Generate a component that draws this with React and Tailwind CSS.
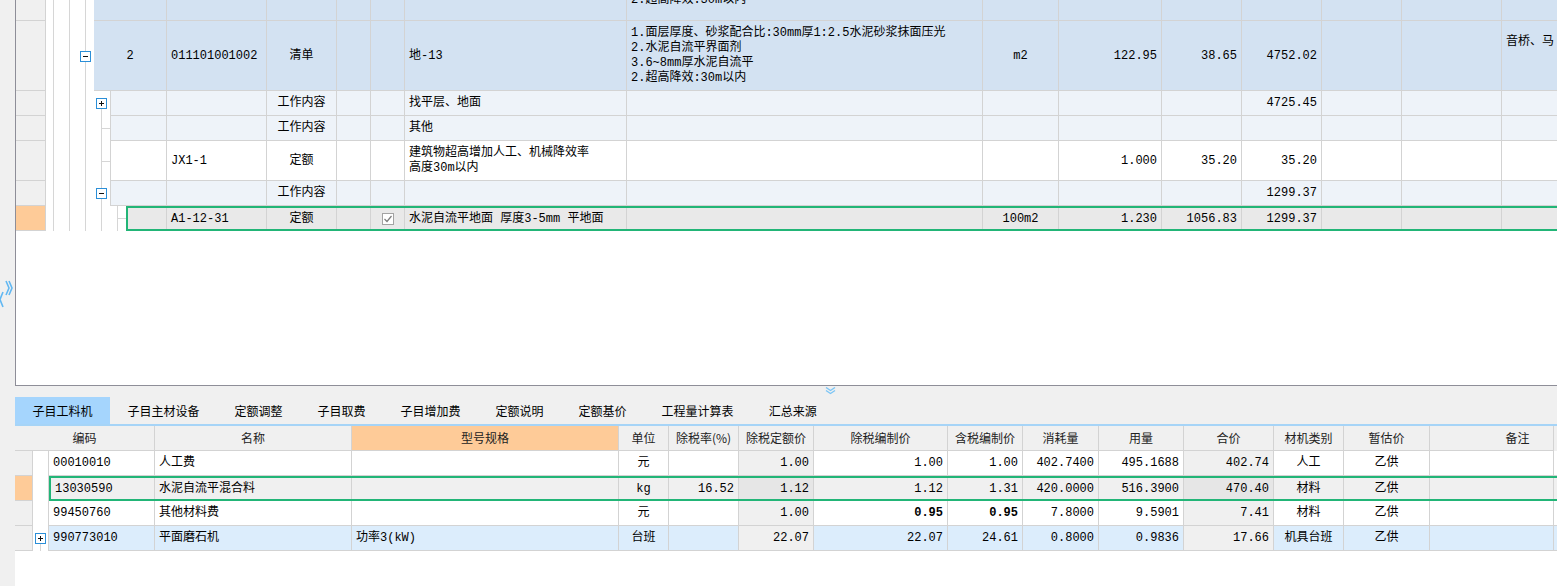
import React from 'react'

// 上部清单表格列（第一列宽度随层级变化）
const TOP_COLS = [
  { w: 'w-[100px]', al: 'l' },
  { w: 'w-[70px]', al: 'c' },
  { w: 'w-[34px]', al: 'c' },
  { w: 'w-[34px]', al: 'c' },
  { w: 'w-[222px]', al: 'l' },
  { w: 'w-[356px]', al: 'l' },
  { w: 'w-[76px]', al: 'c' },
  { w: 'w-[103px]', al: 'r' },
  { w: 'w-[80px]', al: 'r' },
  { w: 'w-[80px]', al: 'r' },
  { w: 'w-[80px]', al: 'r' },
  { w: 'w-[100px]', al: 'l' },
  { w: 'w-[200px]', al: 'l' },
]

const DESC = [
  '1.面层厚度、砂浆配合比:30mm厚1:2.5水泥砂浆抹面压光',
  '2.水泥自流平界面剂',
  '3.6~8mm厚水泥自流平',
  '2.超高降效:30m以内',
]

const L = 'line'
const BR = 'branch'

const TOP_ROWS = [
  {
    h: 'h-[21px]', bg: 'bg-[#d3e2f2]', first: 'w-[73px]', partial: true,
    tree: [L, L, L],
    cells: ['', '', '', '', '', '', ['2.超高降效:30m以内'], '', '', '', '', '', '', ''],
  },
  {
    h: 'h-[70px]', bg: 'bg-[#d3e2f2]', first: 'w-[73px]',
    tree: [L, L, { sign: '-', top: true, bottom: true }],
    cells: ['2', '011101001002', '清单', '', '', '地-13', DESC, 'm2', '122.95', '38.65', '4752.02', '', '', { top: '音桥、马' }],
  },
  {
    h: 'h-[25px]', bg: 'bg-[#eef3f9]', first: 'w-[57px]', indent: true,
    tree: [L, L, L, { sign: '+', bottom: true }],
    cells: ['', '', '工作内容', '', '', '找平层、地面', '', '', '', '', '4725.45', '', '', ''],
  },
  {
    h: 'h-[25px]', bg: 'bg-[#eef3f9]', first: 'w-[57px]', indent: true,
    tree: [L, L, L, BR],
    cells: ['', '', '工作内容', '', '', '其他', '', '', '', '', '', '', '', ''],
  },
  {
    h: 'h-[40px]', bg: 'bg-white', first: 'w-[57px]', indent: true,
    tree: [L, L, L, BR],
    cells: ['', 'JX1-1', '定额', '', '', ['建筑物超高增加人工、机械降效率', '高度30m以内'], '', '', '1.000', '35.20', '35.20', '', '', ''],
  },
  {
    h: 'h-[25px]', bg: 'bg-[#eef3f9]', first: 'w-[57px]', indent: true,
    tree: [L, L, L, { sign: '-', top: true, bottom: true }],
    cells: ['', '', '工作内容', '', '', '', '', '', '', '', '1299.37', '', '', ''],
  },
  {
    h: 'h-[25px]', bg: 'bg-[#e9e9e9]', first: 'w-[39px]', sel: true,
    tree: [L, L, L, L, BR],
    cells: ['', 'A1-12-31', '定额', '', 'check', '水泥自流平地面 厚度3-5mm 平地面', '', '100m2', '1.230', '1056.83', '1299.37', '', '', ''],
  },
]

const TABS = ['子目工料机', '子目主材设备', '定额调整', '子目取费', '子目增加费', '定额说明', '定额基价', '工程量计算表', '汇总来源']

const BOT_COLS = [
  { t: '名称', w: 'w-[197px]', al: 'l' },
  { t: '型号规格', w: 'w-[267px]', al: 'l', hl: true },
  { t: '单位', w: 'w-[50px]', al: 'c' },
  { t: '除税率(%)', w: 'w-[70px]', al: 'r' },
  { t: '除税定额价', w: 'w-[75px]', al: 'r', ro: true },
  { t: '除税编制价', w: 'w-[134px]', al: 'r' },
  { t: '含税编制价', w: 'w-[75px]', al: 'r' },
  { t: '消耗量', w: 'w-[76px]', al: 'r' },
  { t: '用量', w: 'w-[85px]', al: 'r' },
  { t: '合价', w: 'w-[90px]', al: 'r', ro: true },
  { t: '材机类别', w: 'w-[70px]', al: 'c' },
  { t: '暂估价', w: 'w-[86px]', al: 'c' },
  { t: '备注', w: 'w-[124px]', al: 'l' },
]

const BOT_ROWS = [
  { code: '00010010', cells: ['人工费', '', '元', '', '1.00', '1.00', '1.00', '402.7400', '495.1688', '402.74', '人工', '乙供', ''] },
  { code: '13030590', sel: true, cells: ['水泥自流平混合料', '', 'kg', '16.52', '1.12', '1.12', '1.31', '420.0000', '516.3900', '470.40', '材料', '乙供', ''] },
  { code: '99450760', bold: [5, 6], cells: ['其他材料费', '', '元', '', '1.00', '0.95', '0.95', '7.8000', '9.5901', '7.41', '材料', '乙供', ''] },
  { code: '990773010', blue: true, plus: true, cells: ['平面磨石机', '功率3(kW)', '台班', '', '22.07', '22.07', '24.61', '0.8000', '0.9836', '17.66', '机具台班', '乙供', ''] },
]

const ALIGN = { l: 'justify-start', c: 'justify-center', r: 'justify-end' }

function ToggleBox({ sign }) {
  return (
    <svg width="11" height="11" className="ml-[2px] shrink-0">
      <rect x="0.5" y="0.5" width="10" height="10" fill="#fff" stroke="#2b8fd8" />
      <line x1="3" y1="5.5" x2="8" y2="5.5" stroke="#111" />
      {sign === '+' && <line x1="5.5" y1="3" x2="5.5" y2="8" stroke="#111" />}
    </svg>
  )
}

function Tree({ kind }) {
  if (kind === L)
    return (
      <div className="flex w-4 shrink-0">
        <div className="w-[8px] border-r border-[#d6d6d6]" />
      </div>
    )
  if (kind === BR)
    return (
      <div className="flex w-4 shrink-0">
        <div className="w-[8px] border-r border-[#d6d6d6]" />
        <div className="flex flex-1 flex-col">
          <div className="flex-1 border-b border-[#d6d6d6]" />
          <div className="flex-1" />
        </div>
      </div>
    )
  return (
    <div className="flex w-4 shrink-0 flex-col">
      <div className="flex-1">{kind.top && <div className="h-full w-[8px] border-r border-[#d6d6d6]" />}</div>
      <ToggleBox sign={kind.sign} />
      <div className="flex-1">{kind.bottom && <div className="h-full w-[8px] border-r border-[#d6d6d6]" />}</div>
    </div>
  )
}

function Check() {
  return (
    <svg width="12" height="12">
      <rect x="0.5" y="0.5" width="11" height="11" fill="#fff" stroke="#a3a3a3" />
      <path d="M2.5 6 L5 8.5 L9.5 3" fill="none" stroke="#7d7d7d" strokeWidth="1.2" />
    </svg>
  )
}

function TopCell({ w, al, v, partial, extra = '' }) {
  let content = v
  if (v === 'check') content = <Check />
  else if (Array.isArray(v))
    content = (
      <div className="flex flex-col leading-[15px]">
        {v.map(s => <span key={s}>{s}</span>)}
      </div>
    )
  else if (v && v.top) content = v.top
  const vert = partial ? 'items-end pb-[12px]' : v && v.top ? 'items-start pt-[12px]' : 'items-center'
  return (
    <div className={`flex h-full shrink-0 overflow-hidden whitespace-nowrap border-r border-[#d3d3d3] px-[4px] ${w} ${ALIGN[al]} ${vert} ${extra}`}>
      {content}
    </div>
  )
}

function TopRow({ row }) {
  return (
    <div className={`flex shrink-0 ${row.h}`}>
      <div className={`w-[30px] shrink-0 border-b border-r border-[#d3d3d3] ${row.sel ? 'bg-[#fecb98]' : 'bg-[#f0f0f0]'}`} />
      {row.tree.map((t, i) => <Tree key={i} kind={t} />)}
      <div className={`flex min-w-0 flex-1 overflow-hidden ${row.bg} ${row.sel ? 'border-y-2 border-l-2 border-[#22b577]' : 'border-b border-[#d3d3d3]'}`}>
        <TopCell w={row.first} al="c" v={row.cells[0]} extra={row.indent ? 'border-l' : ''} />
        {TOP_COLS.map((c, i) => (
          <TopCell key={i} w={c.w} al={c.al} v={row.cells[i + 1]} partial={row.partial} />
        ))}
      </div>
    </div>
  )
}

function BotRow({ row }) {
  const bg = row.blue ? 'bg-[#dcedfc]' : row.sel ? 'bg-[#f0f0f0]' : 'bg-white'
  return (
    <div className="flex h-[25px] shrink-0">
      <div className={`w-[18px] shrink-0 border-b border-r border-[#d3d3d3] ${row.sel ? 'bg-[#fecb98]' : 'bg-[#f0f0f0]'}`} />
      <div className="flex w-[16px] shrink-0 flex-col border-r border-[#d3d3d3] bg-white">
        {row.plus && (
          <>
            <div className="flex-1" />
            <ToggleBox sign="+" />
            <div className="flex-1"><div className="h-full w-[8px] border-r border-[#d6d6d6]" /></div>
          </>
        )}
      </div>
      <div className={`flex min-w-0 flex-1 ${bg} ${row.sel ? 'border-y-2 border-l-2 border-[#22b577]' : 'border-b border-[#d3d3d3]'}`}>
        <div className={`flex h-full shrink-0 items-center border-r border-[#d3d3d3] px-[4px] ${row.sel ? 'w-[104px]' : 'w-[106px]'}`}>{row.code}</div>
        {BOT_COLS.map((c, i) => {
          const ro = c.ro ? (row.sel ? 'bg-[#e6e6e6]' : 'bg-[#f0f0f0]') : ''
          const bold = row.bold && row.bold.includes(i) ? 'font-bold' : ''
          return (
            <div key={c.t} className={`flex h-full shrink-0 items-center overflow-hidden whitespace-nowrap border-r border-[#d3d3d3] px-[4px] ${c.w} ${ALIGN[c.al]} ${ro} ${bold}`}>
              {row.cells[i]}
            </div>
          )
        })}
      </div>
    </div>
  )
}

export default function App() {
  return (
    <div className="flex h-[586px] w-[1557px] overflow-hidden bg-[#f0f0f0] font-['Liberation_Mono','Noto_Sans_CJK_SC',monospace] text-[12px] text-black">
      {/* 左侧折叠条 */}
      <div className="w-[15px] shrink-0 pt-[280px]">
        <svg width="15" height="30">
          <polyline points="6,1 9,8 6,15" fill="none" stroke="#62b8f2" strokeWidth="1.6" />
          <polyline points="9,1 12,8 9,15" fill="none" stroke="#62b8f2" strokeWidth="1.6" />
          <polyline points="3,12 0,19.5 3,27" fill="none" stroke="#62b8f2" strokeWidth="1.6" />
        </svg>
      </div>

      <div className="flex min-w-0 flex-1 flex-col">
        {/* 上部清单 */}
        <div className="flex h-[386px] shrink-0 flex-col overflow-hidden border-b border-l border-[#8e8e98] bg-white">
          {TOP_ROWS.map((r, i) => <TopRow key={i} row={r} />)}
        </div>

        {/* 页签 */}
        <div className="relative flex h-[38px] shrink-0 items-end">
          {TABS.map((t, i) => (
            <div key={t} className={`flex h-[27px] items-center px-[17.5px] font-['Noto_Sans_CJK_SC',sans-serif] ${i === 0 ? 'bg-[#a5d5fd]' : ''}`}>
              {t}
            </div>
          ))}
          <svg width="11" height="8" className="absolute left-[810px] top-[1px]">
            <polyline points="1,0.5 5.5,3.5 10,0.5" fill="none" stroke="#7cc5f5" strokeWidth="1.4" />
            <polyline points="1,3.5 5.5,6.5 10,3.5" fill="none" stroke="#7cc5f5" strokeWidth="1.4" />
          </svg>
        </div>
        <div className="h-[2px] shrink-0 bg-[#a6d4f7]" />

        {/* 工料机表 */}
        <div className="flex min-h-0 flex-1 flex-col bg-white">
          <div className="flex h-[25px] shrink-0 bg-[#f0f0f0] font-['Noto_Sans_CJK_SC',sans-serif] text-[#222]">
            <div className="flex w-[140px] shrink-0 items-center justify-center border-b border-r border-[#d3d3d3]">编码</div>
            {BOT_COLS.map(c => (
              <div key={c.t} className={`flex shrink-0 items-center justify-center border-b border-r border-[#d3d3d3] ${c.w} ${c.hl ? 'bg-[#fecb98]' : ''} ${c.t === '备注' ? 'pl-[52px]' : ''}`}>
                {c.t}
              </div>
            ))}
          </div>
          {BOT_ROWS.map(r => <BotRow key={r.code} row={r} />)}
        </div>
      </div>
    </div>
  )
}
